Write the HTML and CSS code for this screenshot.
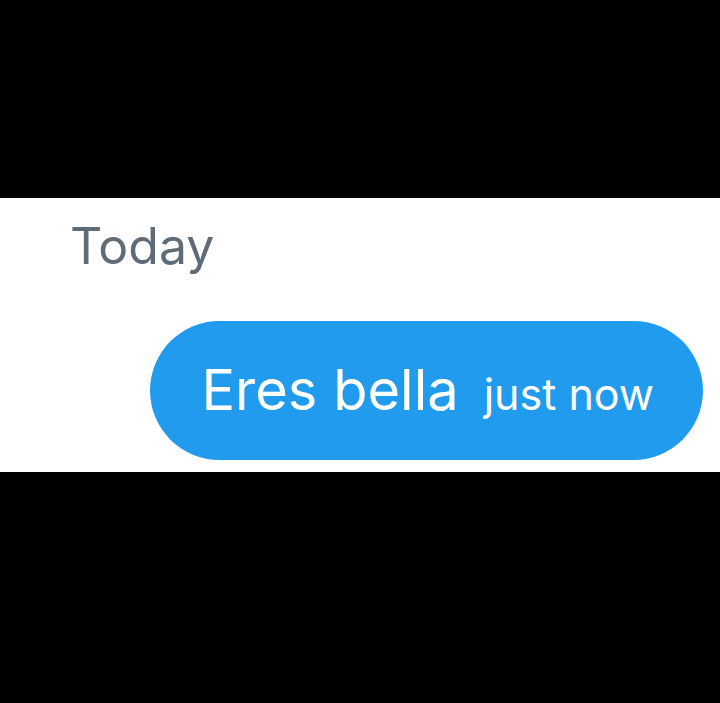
FILE: index.html
```html
<!DOCTYPE html>
<html>
<head>
  <title>Chat</title>
  <link rel="stylesheet" href="styles.css">
</head>
<body>
  <div class="screen">
    <div class="chat">
      <div class="day-label">Today</div>
      <div class="message-row">
        <div class="bubble">
          <span class="bubble-text">Eres bella</span>
          <span class="bubble-time">just now</span>
        </div>
      </div>
    </div>
  </div>
</body>
</html>
```

FILE: styles.css
```css
body {
  margin: 0;
  background: #000;
  font-family: Inter, Roboto, "Noto Sans", sans-serif;
}

.screen {
  height: 703px;
  padding-top: 198px;
  box-sizing: border-box;
}

.chat {
  background: #fff;
  height: 274px;
  box-sizing: border-box;
  padding: 19px 17px 0 70px;
  display: flex;
  flex-direction: column;
}

.day-label {
  color: #5f6b76;
  font-size: 50px;
  line-height: 58px;
}

.message-row {
  display: flex;
  justify-content: flex-end;
  margin-top: 46px;
}

.bubble {
  background: #219bee;
  color: #fff;
  height: 139px;
  border-radius: 70px;
  box-sizing: border-box;
  padding: 0 49px 0 51px;
  display: flex;
  align-items: baseline;
  gap: 25px;
  line-height: 139px;
}

.bubble-text {
  font-size: 56px;
}

.bubble-time {
  font-size: 43px;
}
```
